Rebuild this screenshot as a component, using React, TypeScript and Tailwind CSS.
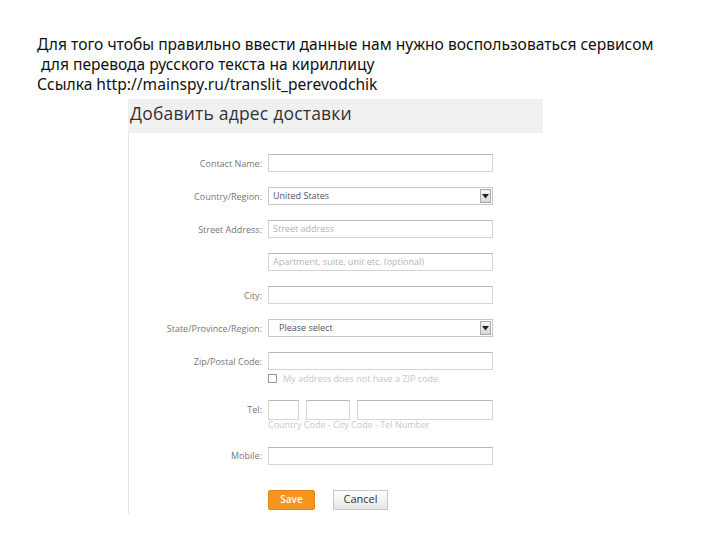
import React from "react";

const labelCls = "w-[139px] shrink-0 text-right pr-[6px] text-[9px] text-[#777] leading-none";
const inputCls = "w-[225px] h-[18px] border border-[#d4d4d4] border-t-[#b8b8b8] bg-white text-[9px] text-[#b4b4b4] flex items-center pl-[4px]";

function Row({ label, children, mt }: { label: string; children?: React.ReactNode; mt: string }) {
  return (
    <div className={`flex items-center ${mt}`}>
      <div className={labelCls}>{label}</div>
      {children}
    </div>
  );
}

function Select({ text, pad }: { text: string; pad: string }) {
  return (
    <div className="w-[225px] h-[18px] border border-[#c8c8c8] bg-white flex items-center relative">
      <span className={`${pad} text-[9px] text-[#555]`}>{text}</span>
      <div className="absolute right-[1px] top-[1px] w-[11px] h-[14px] border border-[#aaa] bg-gradient-to-b from-[#f4f4f4] to-[#d8d8d8] flex items-center justify-center">
        <svg width="7" height="5" viewBox="0 0 7 5"><path d="M0 0 L7 0 L3.5 4.5 Z" fill="#222" /></svg>
      </div>
    </div>
  );
}

export default function App() {
  return (
    <div className="w-[720px] h-[540px] bg-white relative overflow-hidden" style={{ fontFamily: '"Open Sans", "Noto Sans", sans-serif' }}>
      <div className="pt-[34px] pl-[37px] text-[15.6px] leading-[20px] text-[#111]" style={{ fontFamily: '"Noto Sans", "Open Sans", sans-serif' }}>
        <div>Для того чтобы правильно ввести данные нам нужно воспользоваться сервисом</div>
        <div className="pl-[4px]">для перевода русского текста на кириллицу</div>
        <div>Ссылка http://mainspy.ru/translit_perevodchik</div>
      </div>
      <div className="ml-[128px] mt-[5px] w-[415px]">
        <div className="h-[34px] bg-[#f0f0f0] pl-[2px] pb-[6px] flex items-center text-[17.5px] text-[#333] tracking-[0.2px]">Добавить адрес доставки</div>
        <div className="border-l border-[#e4e4e4] h-[381px] pt-[21px]">
          <Row label="Contact Name:" mt=""><div className={inputCls}></div></Row>
          <Row label="Country/Region:" mt="mt-[15px]"><Select text="United States" pad="pl-[4px]" /></Row>
          <Row label="Street Address:" mt="mt-[15px]"><div className={inputCls}>Street address</div></Row>
          <Row label="" mt="mt-[15px]"><div className={inputCls}>Apartment, suite, unit etc. (optional)</div></Row>
          <Row label="City:" mt="mt-[15px]"><div className={inputCls}></div></Row>
          <Row label="State/Province/Region:" mt="mt-[15px]"><Select text="Please select" pad="pl-[10px]" /></Row>
          <Row label="Zip/Postal Code:" mt="mt-[15px]"><div className={inputCls}></div></Row>
          <div className="flex items-center mt-[2px] pl-[139px]">
            <div className="w-[9px] h-[9px] border border-[#999] bg-white"></div>
            <span className="ml-[6px] text-[9px] text-[#c8c8c8]">My address does not have a ZIP code.</span>
          </div>
          <div className="flex items-center mt-[14px]">
            <div className={labelCls}>Tel:</div>
            <div className="flex gap-[7px]">
              <div className="w-[31px] h-[20px] border border-[#d4d4d4] border-t-[#b8b8b8]"></div>
              <div className="w-[44px] h-[20px] border border-[#d4d4d4] border-t-[#b8b8b8]"></div>
              <div className="w-[136px] h-[20px] border border-[#d4d4d4] border-t-[#b8b8b8]"></div>
            </div>
          </div>
          <div className="pl-[139px] text-[9px] text-[#c8c8c8] leading-[10px]">Country Code - City Code - Tel Number</div>
          <Row label="Mobile:" mt="mt-[17px]"><div className={inputCls}></div></Row>
          <div className="flex items-center mt-[25px] pl-[139px]">
            <div className="w-[47px] h-[20px] bg-[#f7941d] border border-[#e08a1e] rounded-[2px] text-white text-[10px] font-semibold flex items-center justify-center">Save</div>
            <div className="ml-[18px] w-[55px] h-[20px] border border-[#c8c8c8] bg-gradient-to-b from-[#ffffff] to-[#e6e6e6] text-[11px] text-[#333] flex items-center justify-center">Cancel</div>
          </div>
        </div>
      </div>
    </div>
  );
}
